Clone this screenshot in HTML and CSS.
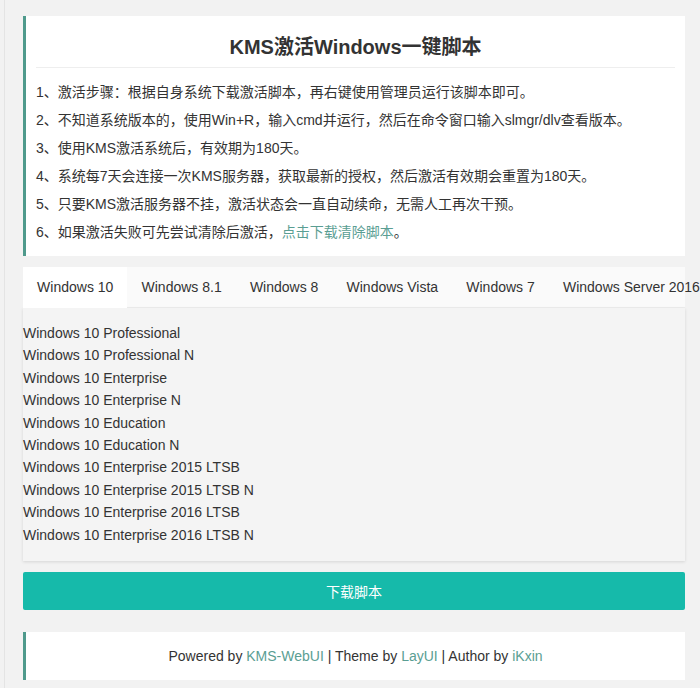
FILE: index.html
```html
<!DOCTYPE html>
<html lang="zh-CN">
<head>
<meta charset="utf-8">
<title>KMS激活Windows一键脚本</title>
<link rel="stylesheet" href="styles.css">
</head>
<body>
<div class="page">
  <div class="quote intro">
    <h1 class="title">KMS激活Windows一键脚本</h1>
    <p>1、激活步骤：根据自身系统下载激活脚本，再右键使用管理员运行该脚本即可。</p>
    <p>2、不知道系统版本的，使用Win+R，输入cmd并运行，然后在命令窗口输入slmgr/dlv查看版本。</p>
    <p>3、使用KMS激活系统后，有效期为180天。</p>
    <p>4、系统每7天会连接一次KMS服务器，获取最新的授权，然后激活有效期会重置为180天。</p>
    <p>5、只要KMS激活服务器不挂，激活状态会一直自动续命，无需人工再次干预。</p>
    <p>6、如果激活失败可先尝试清除后激活，<a class="link" href="#">点击下载清除脚本</a>。</p>
  </div>

  <div class="tabs">
    <ul class="tab-bar">
      <li class="tab active">Windows 10</li>
      <li class="tab">Windows 8.1</li>
      <li class="tab">Windows 8</li>
      <li class="tab">Windows Vista</li>
      <li class="tab">Windows 7</li>
      <li class="tab">Windows Server 2016</li>
    </ul>
    <div class="panel">
      <ul class="list">
        <li>Windows 10 Professional</li>
        <li>Windows 10 Professional N</li>
        <li>Windows 10 Enterprise</li>
        <li>Windows 10 Enterprise N</li>
        <li>Windows 10 Education</li>
        <li>Windows 10 Education N</li>
        <li>Windows 10 Enterprise 2015 LTSB</li>
        <li>Windows 10 Enterprise 2015 LTSB N</li>
        <li>Windows 10 Enterprise 2016 LTSB</li>
        <li>Windows 10 Enterprise 2016 LTSB N</li>
      </ul>
    </div>
  </div>

  <button class="btn" type="button">下载脚本</button>

  <div class="quote footer">
    Powered by <a class="link" href="#">KMS-WebUI</a> | Theme by <a class="link" href="#">LayUI</a> | Author by <a class="link" href="#">iKxin</a>
  </div>
</div>
</body>
</html>
```
FILE: styles.css
```css
html, body {
  margin: 0;
  padding: 0;
  background: #f2f2f2;
}
body {
  font-family: "Liberation Sans", Arial, "Noto Sans CJK SC", sans-serif;
  font-size: 14px;
  color: #333;
  min-height: 688px;
}
.page {
  margin-left: 4px;
  border-left: 1px solid #e4e4e4;
  min-height: 688px;
  padding: 16px 15px 0 18px;
  box-sizing: border-box;
}
.quote {
  background: #fff;
  border-left: 3px solid #4f9a8c;
}
.intro {
  padding: 11px 10px 10px 10px;
}
.title {
  margin: 0 0 10px 0;
  font-size: 20px;
  font-weight: bold;
  line-height: 40px;
  text-align: center;
  border-bottom: 1px solid #eeeeee;
  color: #333;
}
.intro p {
  margin: 0;
  line-height: 28px;
}
.link {
  color: #5a9e93;
  text-decoration: none;
}
.tabs {
  margin-top: 11px;
}
.tab-bar {
  list-style: none;
  margin: 0;
  padding: 0;
  display: flex;
  white-space: nowrap;
  background: #fafafa;
  border-bottom: 1px solid #eeeeee;
  height: 40px;
}
.tab {
  padding: 0 14.1px;
  line-height: 40px;
  flex: none;
}
.tab.active {
  background: #fff;
  height: 41px;
}
.panel {
  background: #f4f4f4;
  box-shadow: 0 1px 3px rgba(0, 0, 0, 0.12);
}
.list {
  list-style: none;
  margin: 0;
  padding: 14px 0 15px 0;
}
.list li {
  line-height: 22.4px;
}
.btn {
  display: block;
  width: 100%;
  margin-top: 11px;
  height: 38px;
  border: 0;
  border-radius: 2px;
  background: #16baaa;
  color: #fff;
  font-family: "Liberation Sans", Arial, "Noto Sans CJK SC", sans-serif;
  font-size: 14px;
  cursor: pointer;
}
.footer {
  margin-top: 22px;
  height: 48px;
  line-height: 48px;
  text-align: center;
}
```
